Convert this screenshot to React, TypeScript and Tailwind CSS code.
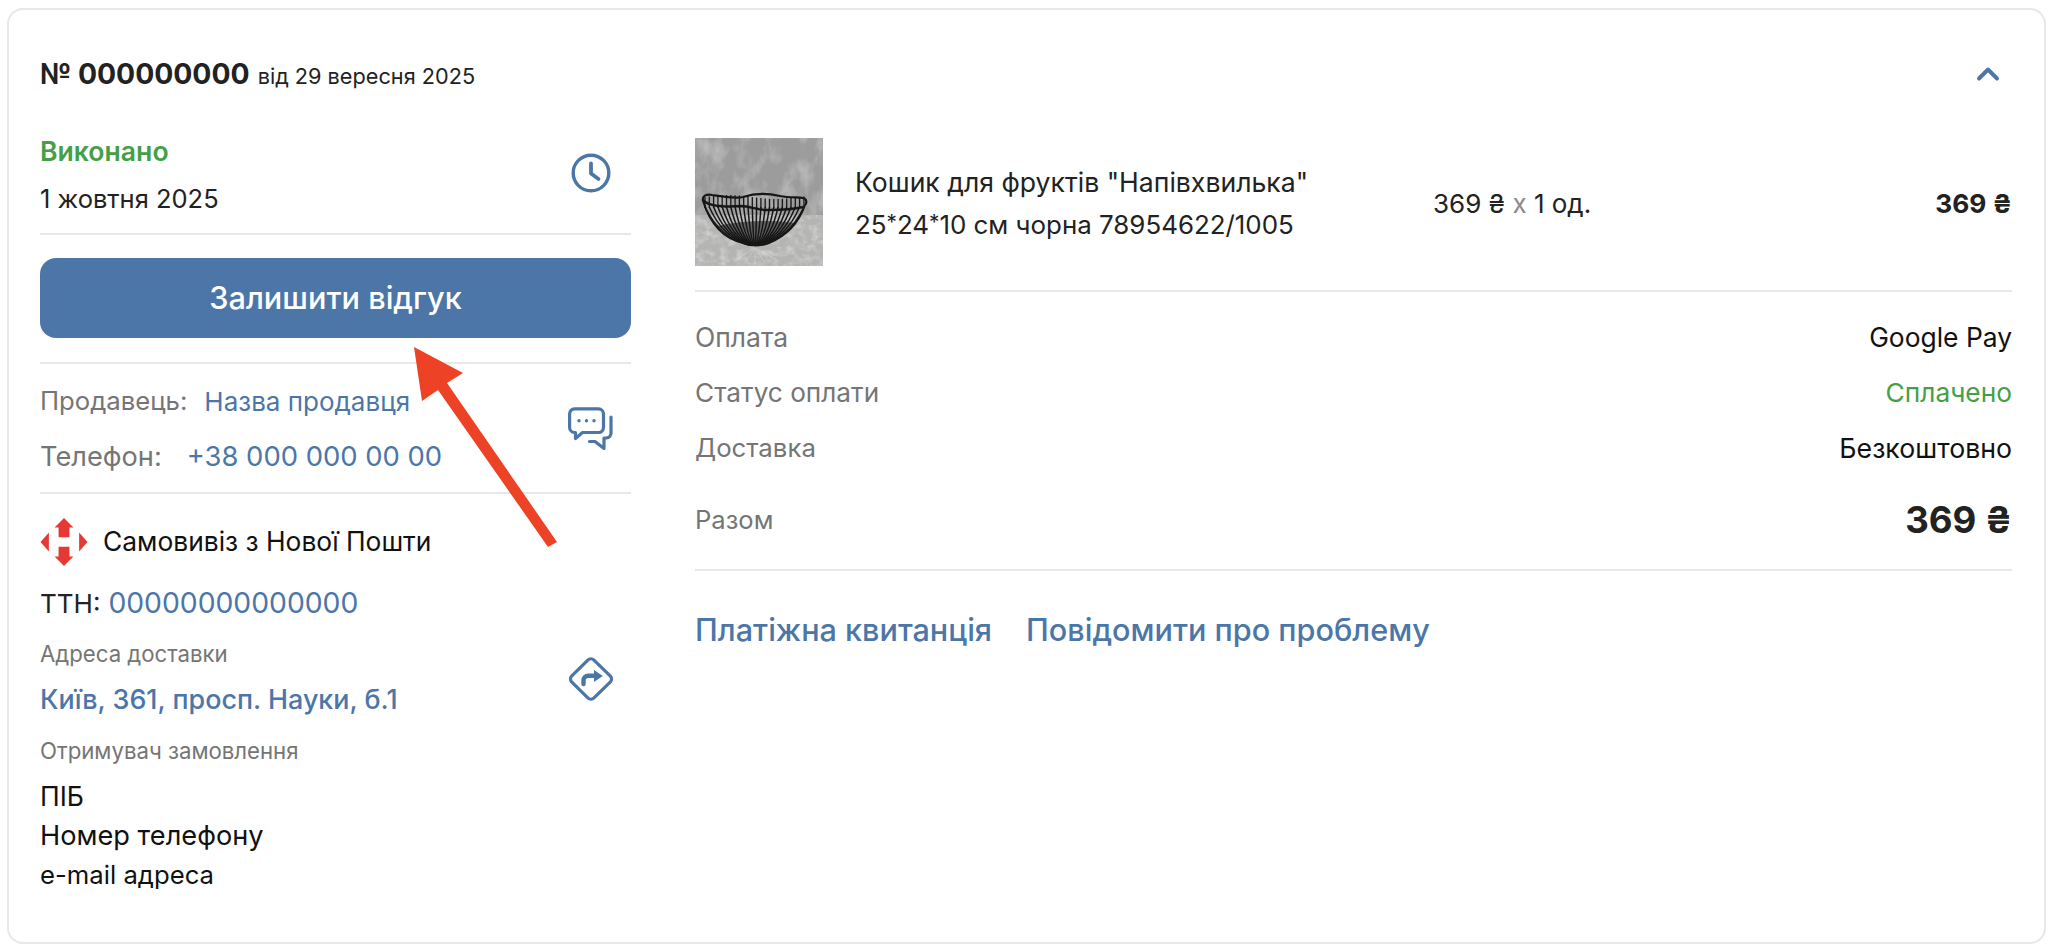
import { ChevronUp } from "lucide-react";

const font = "font-['Inter','Noto_Sans',sans-serif]";

function ClockIcon() {
  return (
    <svg viewBox="0 0 40 40" className="w-10 h-10" fill="none" stroke="#4c76a8" strokeWidth="3.4" strokeLinecap="round" strokeLinejoin="round">
      <circle cx="20" cy="20" r="17.8" />
      <path d="M20 10.5V20.5L27.5 26" strokeWidth="3.8" />
    </svg>
  );
}

function ChatIcon() {
  return (
    <svg viewBox="0 0 46 44" className="w-[46px] h-[44px]" fill="none" stroke="#4c76a8" strokeWidth="3.2" strokeLinecap="round" strokeLinejoin="round">
      <path d="M6.5 1.8H30.5A5 5 0 0 1 35.5 6.8V20.5A5 5 0 0 1 30.5 25.5H14.5L7.5 31.5V25.5H6.5A5 5 0 0 1 1.6 20.5V6.8A5 5 0 0 1 6.5 1.8Z" />
      <path d="M43 10V26A5 5 0 0 1 38.5 31H36V41.5L27 34.5H21.5" />
      <circle cx="11" cy="13.8" r="1.7" fill="#4c76a8" stroke="none" />
      <circle cx="18.5" cy="13.8" r="1.7" fill="#4c76a8" stroke="none" />
      <circle cx="26" cy="13.8" r="1.7" fill="#4c76a8" stroke="none" />
    </svg>
  );
}

function DirectionIcon() {
  return (
    <svg viewBox="0 0 46 44" className="w-[46px] h-[44px]" fill="none">
      <path d="M19.8 3.2 3.6 19.2a4 4 0 0 0 0 5.6l16.2 16a4.4 4.4 0 0 0 6.2 0l16.4-16a4 4 0 0 0 0-5.6L26 3.2a4.4 4.4 0 0 0-6.2 0Z" stroke="#4c76a8" strokeWidth="3.2" />
      <path d="M15.5 27V23.5C15.5 20.8 17.5 18.8 20.2 18.8H27" stroke="#4c76a8" strokeWidth="4.4" strokeLinecap="round" />
      <path d="M26 13 34.8 19 26 25Z" fill="#4c76a8" />
    </svg>
  );
}

function NovaPoshtaLogo() {
  return (
    <svg viewBox="0 0 46 46" className="w-[48px] h-[48px]" fill="#e53935">
      <path d="M23 0 32 9H28.2V18.5H17.8V9H14Z" />
      <path d="M23 46 32 37H28.2V27.5H17.8V37H14Z" />
      <path d="M0.5 23 8.5 14V32Z" />
      <path d="M45.5 23 37.5 14V32Z" />
    </svg>
  );
}

function BasketPicture() {
  const ribs = Array.from({ length: 24 }, (_, i) => i);
  return (
    <svg viewBox="0 0 128 128" className="w-[128px] h-[128px] shrink-0">
      <defs>
        <filter id="light" x="0" y="0" width="100%" height="100%">
          <feTurbulence type="fractalNoise" baseFrequency="0.07 0.04" numOctaves="4" seed="8" />
          <feColorMatrix values="0 0 0 0 1  0 0 0 0 1  0 0 0 0 1  2.2 0 0 0 -0.95" />
        </filter>
        <filter id="floor" x="0" y="0" width="100%" height="100%">
          <feTurbulence type="fractalNoise" baseFrequency="0.12 0.16" numOctaves="3" seed="4" />
          <feColorMatrix values="0 0 0 0 0.95  0 0 0 0 0.95  0 0 0 0 0.95  2.2 0 0 0 -0.9" />
        </filter>
        <filter id="soft">
          <feGaussianBlur stdDeviation="0.4" />
        </filter>
      </defs>
      <rect width="128" height="78" fill="#9c9c9c" />
      <rect width="128" height="78" filter="url(#light)" opacity="0.35" />
      <rect y="77" width="128" height="51" fill="#b4b4b2" />
      <rect y="77" width="128" height="51" filter="url(#floor)" opacity="0.4" />
      <g stroke="#e8e8e8" strokeWidth="0.7" opacity="0.5">
        <path d="M60 110 40 122M60 110 50 125M60 110 60 126M60 110 70 125M60 110 82 122" />
      </g>
      <g filter="url(#soft)" fill="none" stroke="#171717">
        <path d="M22 88Q40 104 58 107L68 107Q90 100 100 85Q60 80 22 88Z" fill="#4a4a4a" opacity="0.8" stroke="none" />
        {ribs.map((i) => {
          const x = 10 + i * 4.3;
          return <path key={i} d={`M${x} ${69}Q${x + (60 - x) * 0.3} 100 ${60 + (x - 60) * 0.12} 107`} strokeWidth="1.5" />;
        })}
        {ribs.map((i) => {
          const x = 10 + i * 4.3;
          return <path key={i} d={`M${x} ${59 - Math.sin(i / 3.5) * 2}V70`} strokeWidth="1.3" />;
        })}
        <path d="M8 63C7 57 12 56 17 57C30 59 40 61 48 59C60 55 72 55 85 58C95 60 103 59 108 60C112 61 112 65 110 67" strokeWidth="2.2" />
        <path d="M8 62C14 69 30 69 46 68C56 68 60 72 72 72C85 72 97 72 108 69" strokeWidth="2.4" />
        <path d="M8 63C14 82 26 100 48 105C56 108 66 108 74 105C94 97 104 84 110 67" strokeWidth="2" />
      </g>
    </svg>
  );
}

function SummaryRow({ label, labelClass, value, valueClass }: { label: string; labelClass: string; value: string; valueClass: string }) {
  return (
    <div className="flex items-center justify-between h-10">
      <span className={labelClass}>{label}</span>
      <span className={valueClass}>{value}</span>
    </div>
  );
}

function Star() {
  return <span className="align-[0.22em] text-[0.8em]">*</span>;
}

export default function App() {
  return (
    <div className={`relative w-full h-[948px] bg-white pt-[8px] pl-[7px] pr-[8px] text-[#222] overflow-hidden ${font}`}>
      <div className="h-[936px] border-2 border-[#e8e8e8] rounded-[16px] pt-[38px] pl-[31px] pr-[32px]">
        {/* Header */}
        <div className="flex items-center justify-between h-[52px]">
          <div className="flex items-baseline gap-2">
            <span className="text-[28.3px] font-bold">№ 000000000</span>
            <span className="text-[21.7px]">від 29 вересня 2025</span>
          </div>
          <ChevronUp className="w-9 h-9 text-[#4c76a8] mr-[6px]" strokeWidth={2.6} />
        </div>

        <div className="flex gap-[64px] mt-[32px]">
          {/* Left column */}
          <div className="w-[591px] shrink-0">
            <div className="flex items-center justify-between border-b-2 border-[#e8e8e8] pb-[14px]">
              <div className="flex flex-col gap-[7px]">
                <span className="flex items-center h-10 text-[26.6px] font-semibold text-[#43a047]">Виконано</span>
                <span className="flex items-center h-10 text-[25.5px]">1 жовтня 2025</span>
              </div>
              <div className="mr-[20px] mb-[6px]"><ClockIcon /></div>
            </div>

            <button className="w-full h-20 mt-[23px] rounded-[16px] bg-[#4c76a8] text-white text-[30.7px] font-medium">
              Залишити відгук
            </button>

            <div className="flex items-center justify-between mt-6 border-y-2 border-[#e8e8e8] pt-[17px] pb-[15px]">
              <div className="flex flex-col gap-4">
                <div className="flex items-center h-10 gap-[17px] text-[26px]">
                  <span className="text-[#757575] text-[25.7px]">Продавець:</span>
                  <span className="text-[#4c76a8]">Назва продавця</span>
                </div>
                <div className="flex items-center h-10 gap-[25px]">
                  <span className="text-[#757575] text-[27.2px]">Телефон:</span>
                  <span className="text-[#4c76a8] text-[27.4px]">+38 000 000 00 00</span>
                </div>
              </div>
              <div className="mr-[17px]"><ChatIcon /></div>
            </div>

            <div className="flex items-center gap-[15px] mt-6 text-[26.4px] text-[#111]">
              <NovaPoshtaLogo />
              <span>Самовивіз з Нової Пошти</span>
            </div>

            <div className="flex items-end justify-between">
              <div>
                <div className="flex items-center h-9 mt-[19px] gap-2 text-[26px]">
                  <span>ТТН:</span>
                  <span className="text-[#4c76a8] text-[28.3px]">00000000000000</span>
                </div>
                <div className="flex items-center h-[30px] mt-[18px] text-[22.2px] text-[#757575]">Адреса доставки</div>
                <div className="flex items-center h-9 mt-3 text-[26.9px] font-medium text-[#4c76a8]">Київ, 361, просп. Науки, б.1</div>
              </div>
              <div className="mr-[17px] mb-4"><DirectionIcon /></div>
            </div>

            <div className="flex items-center h-[30px] mt-[19px] text-[22.2px] text-[#757575]">Отримувач замовлення</div>
            <div className="mt-[11px] text-[26.5px] leading-[39px] text-[#111]">
              <div>ПІБ</div>
              <div className="text-[27.2px]">Номер телефону</div>
              <div className="text-[25.7px]">e-mail адреса</div>
            </div>
          </div>

          {/* Right column */}
          <div className="flex-1 pt-[6px]">
            <div className="flex items-center border-b-2 border-[#e8e8e8] pb-6">
              <BasketPicture />
              <div className="w-[610px] pl-8 pt-[3px] text-[26.6px] leading-10">
                Кошик для фруктів "Напівхвилька"<br />
                <span className="text-[25.9px]">25<Star />24<Star />10 см чорна 78954622/1005</span>
              </div>
              <div className="pt-[3px] text-[26px]">369 ₴ <span className="text-[#8a8a8a]">x</span> 1 од.</div>
              <div className="ml-auto pt-[3px] text-[26.3px] font-bold">369 ₴</div>
            </div>

            <div className="flex flex-col gap-[15px] mt-[26px]">
              <SummaryRow label="Оплата" labelClass="text-[26.5px] text-[#757575]" value="Google Pay" valueClass="text-[26.4px] text-[#111]" />
              <SummaryRow label="Статус оплати" labelClass="text-[26.2px] text-[#757575]" value="Сплачено" valueClass="text-[26.3px] text-[#43a047]" />
              <SummaryRow label="Доставка" labelClass="text-[25.8px] text-[#757575]" value="Безкоштовно" valueClass="text-[26.7px] text-[#111]" />
            </div>

            <div className="flex items-center justify-between h-[50px] mt-[27px]">
              <span className="text-[25.6px] text-[#757575]">Разом</span>
              <span className="text-[36.6px] font-bold">369 ₴</span>
            </div>

            <div className="flex items-center gap-[34px] h-10 mt-6 text-[30.6px] font-medium text-[#4c76a8] border-t-2 border-[#e8e8e8] box-content pt-[39px]">
              <span>Платіжна квитанція</span>
              <span>Повідомити про проблему</span>
            </div>
          </div>
        </div>
      </div>

      {/* Red annotation arrow */}
      <svg className="absolute left-[400px] top-[335px] w-[170px] h-[225px]" viewBox="0 0 170 225" fill="#ee4226">
        <path d="M14 12 63 38 47 48 157 207 148 212 38 55 22 66Z" />
      </svg>
    </div>
  );
}
